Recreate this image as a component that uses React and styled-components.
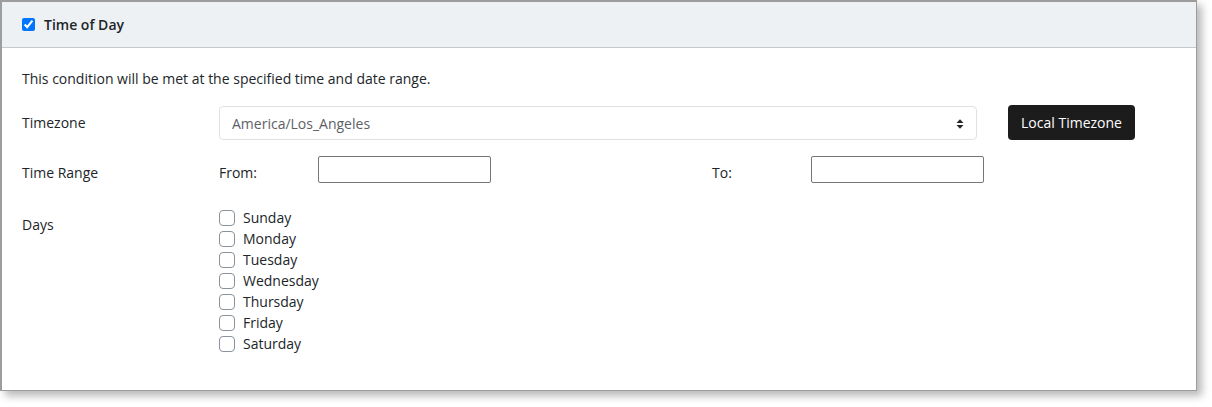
import React from "react";
import styled, { createGlobalStyle } from "styled-components";

const Global = createGlobalStyle`
  html, body { margin: 0; padding: 0; background: #ffffff; }
  body { font-family: "Open Sans", "Noto Sans", sans-serif; color: #212529; min-height: 407px; }
  * { box-sizing: border-box; }
`;

const Page = styled.div`
  padding-bottom: 16px;
`;

const Card = styled.section`
  width: 1197px;
  height: 391px;
  border: 1px solid #9d9d9d;
  border-left-width: 2px;
  border-top-width: 2px;
  background: #fff;
  box-shadow: 5px 5px 8px rgba(0, 0, 0, 0.28);
  display: flex;
  flex-direction: column;
`;

const Header = styled.header`
  height: 46px;
  background: #eef1f4;
  border-bottom: 1px solid #c6c8ca;
  display: flex;
  align-items: center;
  gap: 9px;
  padding-left: 19px;
`;

const HeaderCheck = styled.input`
  width: 13px;
  height: 13px;
  margin: 0 0 0 1px;
  accent-color: #0075ff;
`;

const Title = styled.span`
  font-size: 14px;
  font-weight: 600;
  color: #212529;
`;

const Body = styled.div`
  padding: 21px 20px 0 20px;
  display: flex;
  flex-direction: column;
`;

const Description = styled.p`
  margin: 0 0 17px 0;
  font-size: 14px;
  line-height: 20px;
`;

const Row = styled.div`
  display: grid;
  grid-template-columns: 197px 1fr;
  align-items: ${(p) => p.$align || "center"};
  margin-bottom: ${(p) => p.$mb || 0}px;
`;

const Label = styled.div`
  font-size: 14px;
  line-height: 20px;
  padding-top: ${(p) => p.$pt || 0}px;
`;

const TzControls = styled.div`
  display: flex;
  align-items: center;
  gap: 31px;
`;

const SelectBox = styled.div`
  position: relative;
  width: 758px;
  height: 34px;
  border: 1px solid #dee2e6;
  border-radius: 4px;
  display: flex;
  align-items: center;
  padding-left: 12px;
  font-size: 14px;
  color: #5c6167;
`;

const Arrow = styled.svg`
  position: absolute;
  right: 12px;
  top: 11px;
`;

const DarkButton = styled.button`
  height: 35px;
  width: 127px;
  background: #1c1c1c;
  color: #fff;
  border: none;
  border-radius: 4px;
  font-family: "Open Sans", "Noto Sans", sans-serif;
  font-size: 14px;
  padding: 0;
  margin-top: -1px;
`;

const RangeGrid = styled.div`
  display: grid;
  grid-template-columns: 493px 493px;
  align-items: center;
`;

const RangeHalf = styled.div`
  display: grid;
  grid-template-columns: 99px 173px;
  align-items: center;
`;

const SubLabel = styled.span`
  font-size: 14px;
  line-height: 20px;
  padding-top: 7px;
`;

const TimeInput = styled.input`
  width: 173px;
  height: 27px;
  border: 1px solid #767676;
  border-radius: 2px;
  margin: 0;
  padding: 0 4px;
  font-family: "Open Sans", sans-serif;
  font-size: 14px;
`;

const DayList = styled.div`
  display: flex;
  flex-direction: column;
`;

const DayItem = styled.label`
  display: flex;
  align-items: center;
  height: 21px;
  gap: 8px;
  font-size: 14px;
  color: #212529;
`;

const DayBox = styled.span`
  width: 16px;
  height: 16px;
  border: 1px solid #8a939c;
  border-radius: 4px;
  background: #fff;
  flex: none;
`;

const days = ["Sunday", "Monday", "Tuesday", "Wednesday", "Thursday", "Friday", "Saturday"];

export default function App() {
  return (
    <Page>
      <Global />
      <Card>
        <Header>
          <HeaderCheck type="checkbox" defaultChecked />
          <Title>Time of Day</Title>
        </Header>
        <Body>
          <Description>This condition will be met at the specified time and date range.</Description>
          <Row $mb={16}>
            <Label>Timezone</Label>
            <TzControls>
              <SelectBox>
                America/Los_Angeles
                <Arrow width="8" height="12" viewBox="0 0 8 12">
                  <path d="M0.5 5 L4 1.2 L7.5 5 Z" fill="#212529" />
                  <path d="M0.5 7 L4 10.8 L7.5 7 Z" fill="#212529" />
                </Arrow>
              </SelectBox>
              <DarkButton>Local Timezone</DarkButton>
            </TzControls>
          </Row>
          <Row $mb={24}>
            <Label $pt={7}>Time Range</Label>
            <RangeGrid>
              <RangeHalf>
                <SubLabel>From:</SubLabel>
                <TimeInput type="text" />
              </RangeHalf>
              <RangeHalf>
                <SubLabel>To:</SubLabel>
                <TimeInput type="text" />
              </RangeHalf>
            </RangeGrid>
          </Row>
          <Row $align="start">
            <Label $pt={8}>Days</Label>
            <DayList>
              {days.map((d) => (
                <DayItem key={d}>
                  <DayBox />
                  {d}
                </DayItem>
              ))}
            </DayList>
          </Row>
        </Body>
      </Card>
    </Page>
  );
}
